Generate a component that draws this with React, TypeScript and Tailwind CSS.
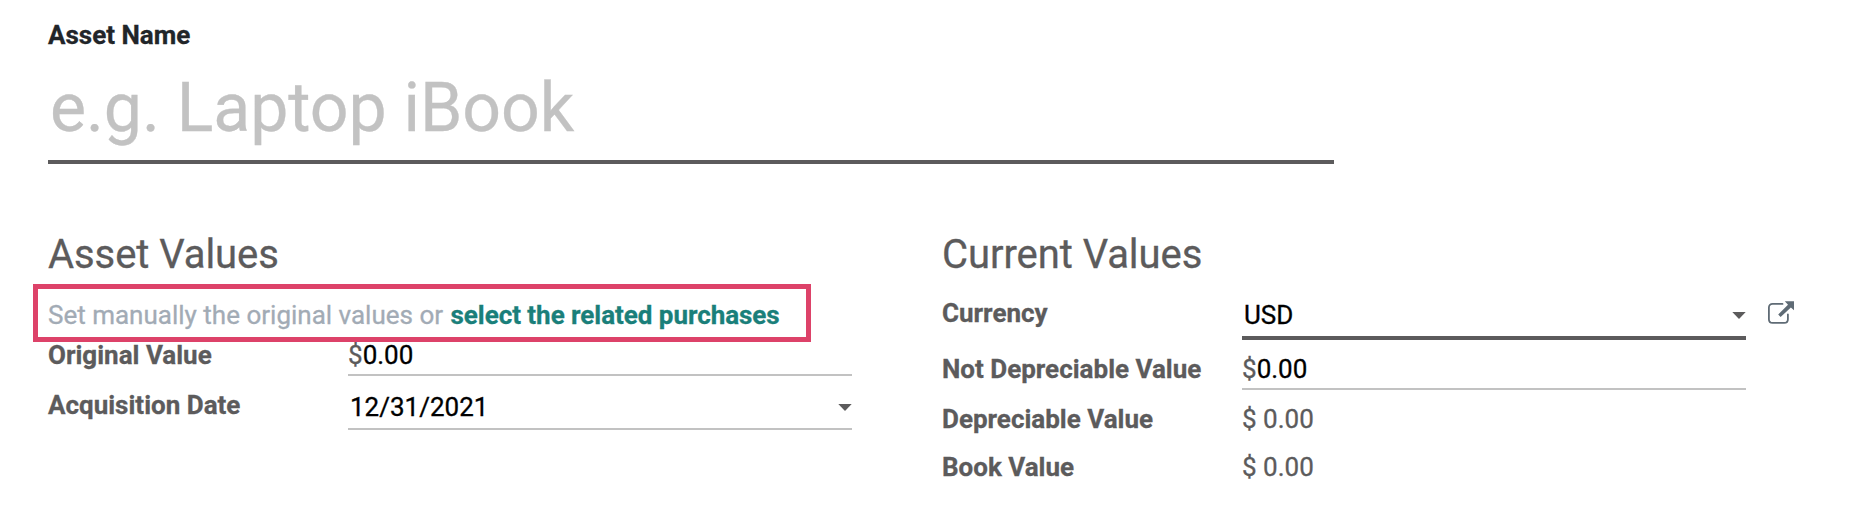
import type { ReactNode } from 'react';

function Label({ children }: { children: ReactNode }) {
  return <div className="w-[300px] shrink-0 font-bold">{children}</div>;
}

function Caret() {
  return (
    <svg className="mt-[17px] h-[7px] w-[14px]" viewBox="0 0 14 7">
      <path d="M0.3 0h13.4L7 7z" fill="#5c5b5c" />
    </svg>
  );
}

function ExternalLinkIcon() {
  return (
    <svg className="mt-2 ml-[22px] h-[23px] w-[26px] shrink-0" viewBox="0 0 26 23">
      <path
        d="M14.5 2.9H4.6C2.4 2.9 0.9 4.4 0.9 6.6v11.6c0 2.2 1.5 3.7 3.7 3.7h11.6c2.2 0 3.7-1.5 3.7-3.7V13.5"
        fill="none"
        stroke="#5f6b75"
        strokeWidth="1.8"
        strokeLinecap="round"
      />
      <path d="M16.8 0.3H26v9L22.9 6.6 12.6 15.9 10.2 13.6 20 3.7z" fill="#5f6b75" />
    </svg>
  );
}

export default function App() {
  return (
    <div className="h-[520px] w-[1876px] overflow-hidden bg-white px-12 pt-[15px] font-[Roboto,sans-serif] text-[26px] leading-10 text-[#5c5b5c] [-webkit-text-stroke:0.3px]">
      {/* Asset name */}
      <div className="font-bold text-[#212529]">Asset Name</div>
      <div className="mt-[13px] h-24 w-[1286px] border-b-4 border-[#5c5b5c] pl-0.5 text-[68px] leading-[80px] tracking-[-0.06px] text-[#c2c2c2]">
        e.g. Laptop iBook
      </div>

      <div className="mt-[67px] flex">
        {/* Asset values */}
        <section className="w-[894px] shrink-0">
          <h2 className="text-[40px] leading-[48px] tracking-[-0.06px]">Asset Values</h2>
          <div className="relative mt-4 whitespace-nowrap">
            <span className="text-[#a2abb5]">Set manually the original values or </span>
            <a className="ml-px font-bold tracking-[-0.04px] text-[#1a7f7a]">select the related purchases</a>
            <div className="absolute -top-[11px] -left-[15.5px] h-[58px] w-[778px] border-5 border-[#dd4269]" />
          </div>
          <div className="flex">
            <Label>Original Value</Label>
            <div className="h-[41px] w-[504px] border-b-2 border-[#c2c2c2]">
              $<span className="text-black">0.00</span>
            </div>
          </div>
          <div className="mt-[9px] flex">
            <Label>Acquisition Date</Label>
            <div className="mt-0.5 flex h-[43px] w-[504px] justify-between border-b-2 border-[#c2c2c2] pl-0.5 text-black">
              12/31/2021
              <Caret />
            </div>
          </div>
        </section>

        {/* Current values */}
        <section>
          <h2 className="text-[40px] leading-[48px] tracking-[-0.06px]">Current Values</h2>
          <div className="mt-3.5 flex">
            <Label>Currency</Label>
            <div className="mt-0.5 flex h-[45px] w-[504px] justify-between border-b-4 border-[#5c5b5c] pl-0.5 text-black">
              USD
              <Caret />
            </div>
            <ExternalLinkIcon />
          </div>
          <div className="mt-[9px] flex">
            <Label>Not Depreciable Value</Label>
            <div className="h-[41px] w-[504px] border-b-2 border-[#c2c2c2]">
              $<span className="text-black">0.00</span>
            </div>
          </div>
          <div className="mt-[9px] flex">
            <Label>Depreciable Value</Label>
            <div>$ 0.00</div>
          </div>
          <div className="mt-2 flex">
            <Label>Book Value</Label>
            <div>$ 0.00</div>
          </div>
        </section>
      </div>
    </div>
  );
}
